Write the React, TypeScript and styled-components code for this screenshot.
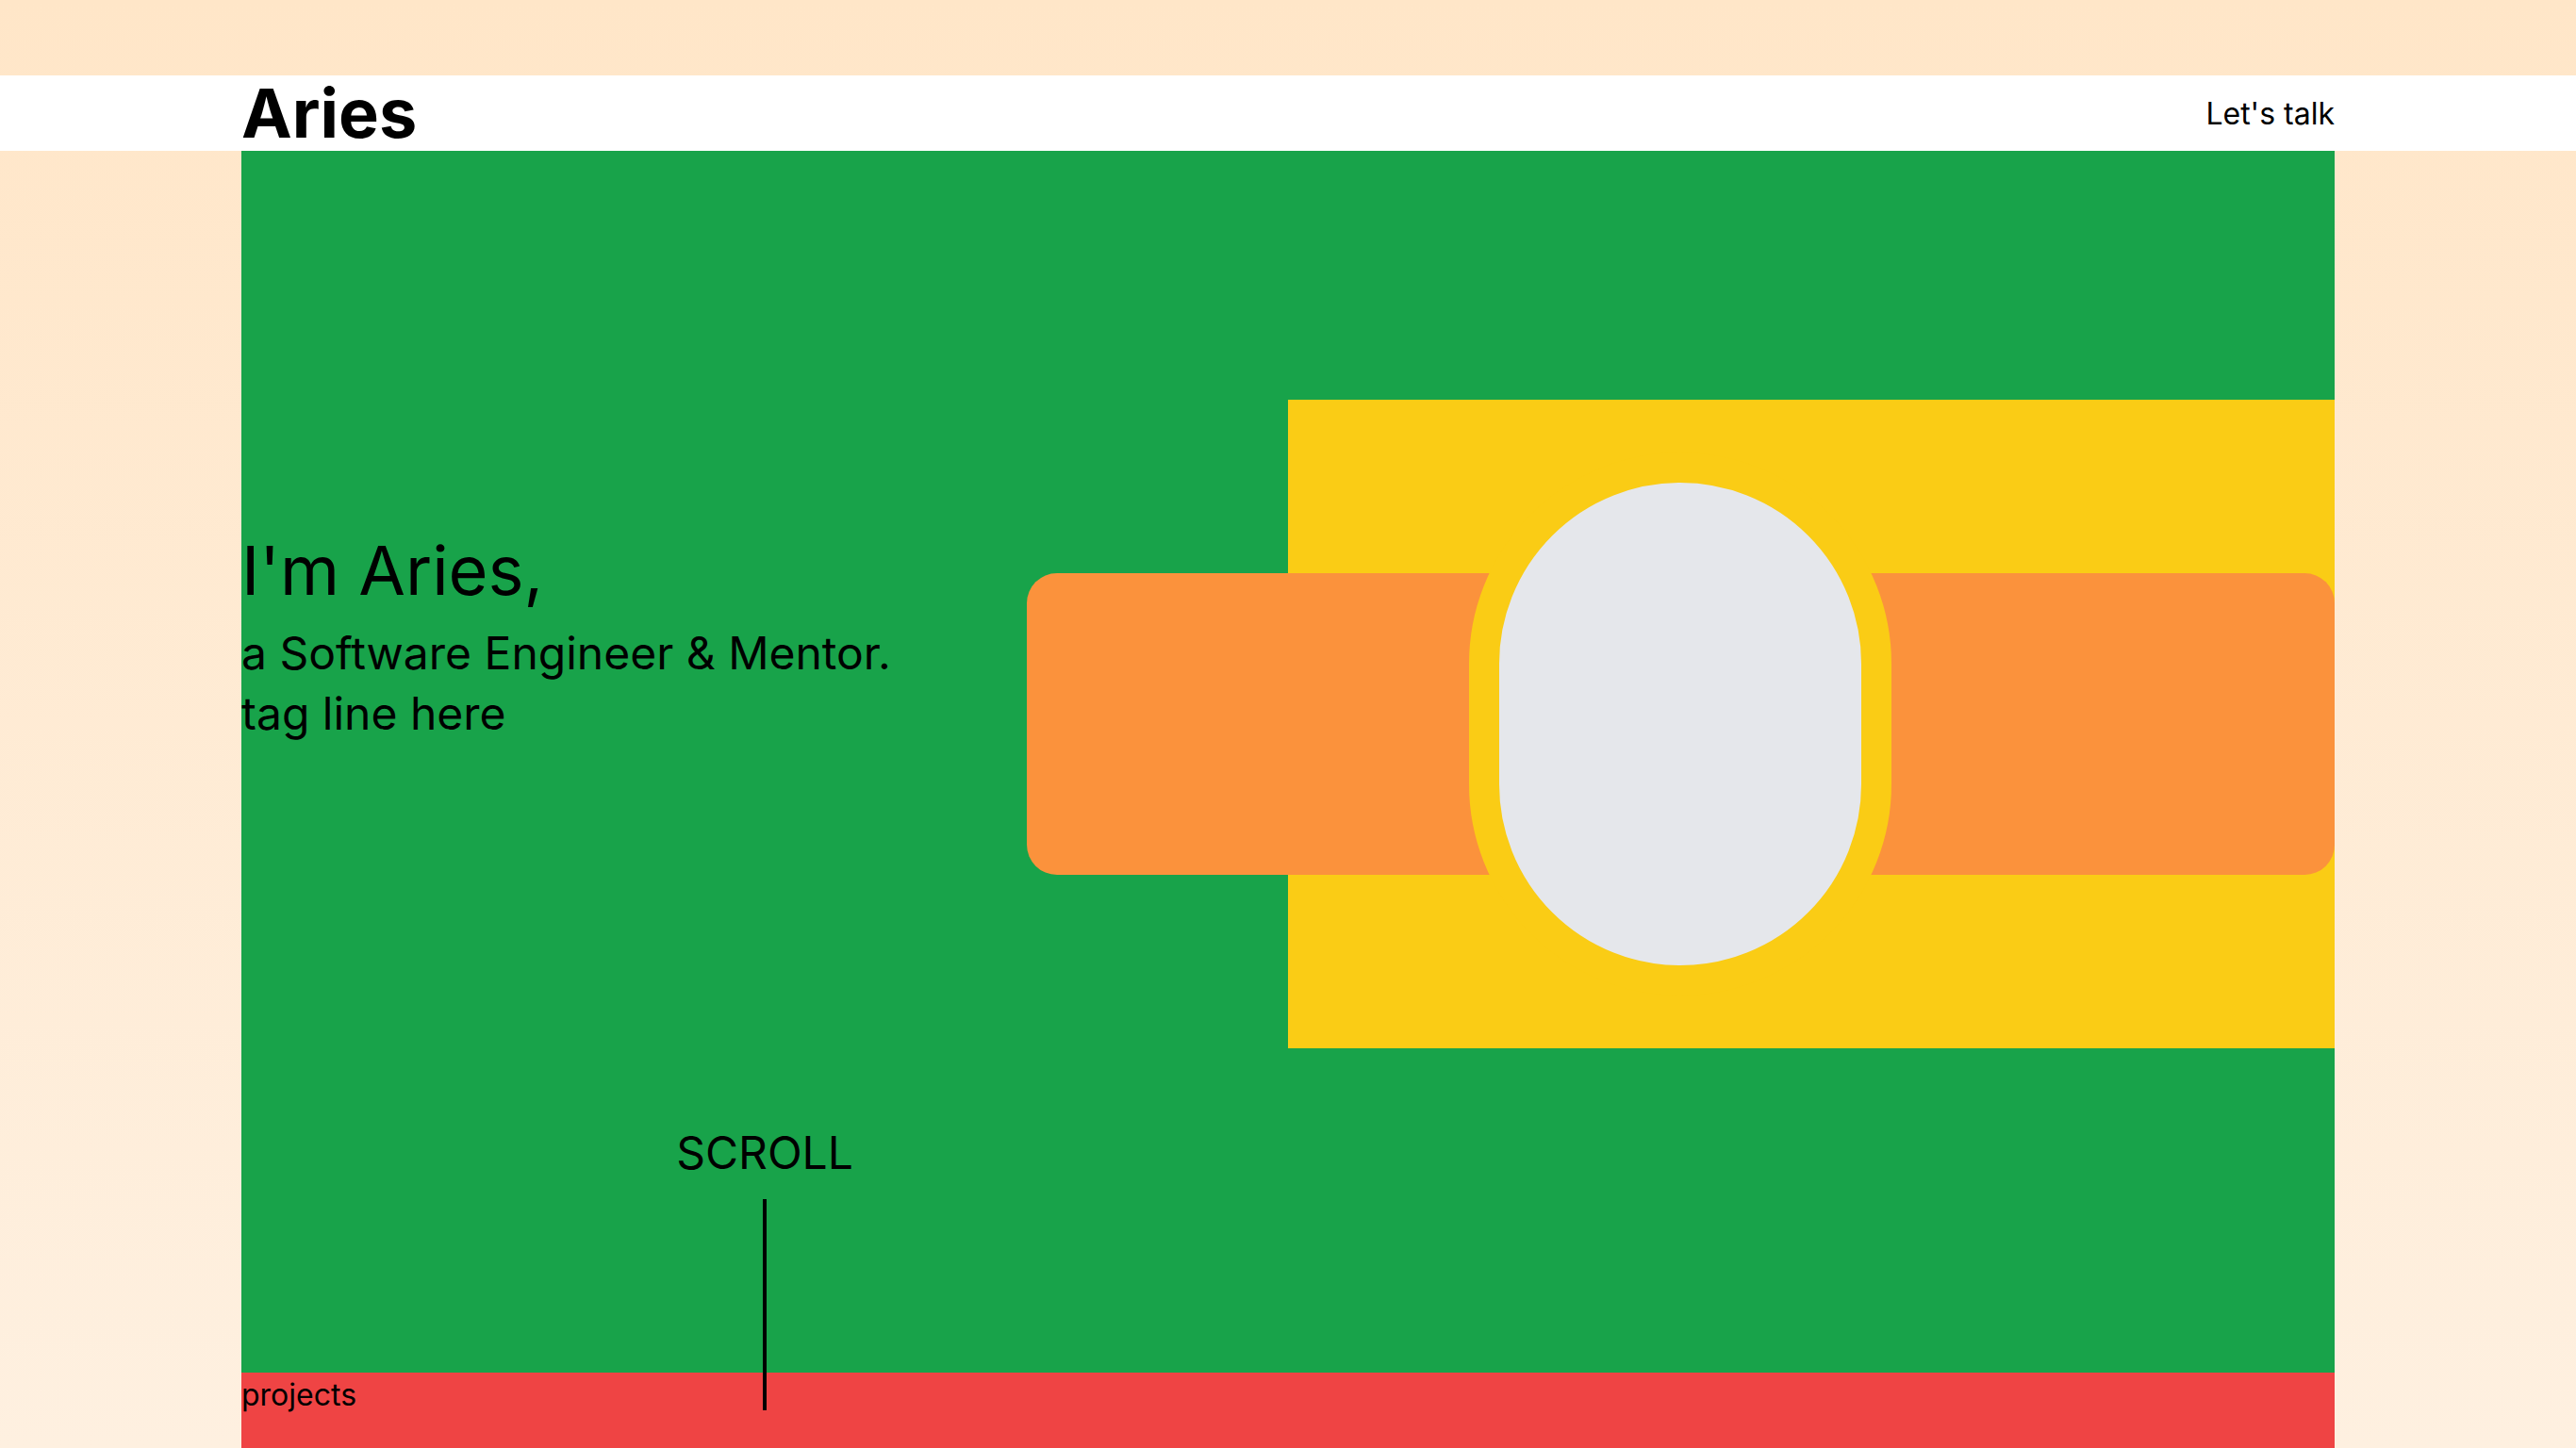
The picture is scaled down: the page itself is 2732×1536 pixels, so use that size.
import React from "react";
import styled, { createGlobalStyle } from "styled-components";

const GlobalStyle = createGlobalStyle`
  html, body {
    margin: 0;
    padding: 0;
  }
  body {
    font-family: Inter, "Noto Sans", sans-serif;
    color: #000;
    background: linear-gradient(180deg, #ffe6c8 0%, #fef0e0 100%);
    min-height: 100vh;
  }
  * { box-sizing: border-box; }
`;

const Page = styled.div`
  display: flex;
  flex-direction: column;
  padding-top: 80px;
`;

const HeaderBar = styled.header`
  background: #ffffff;
  height: 80px;
`;

const Container = styled.div`
  width: 2220px;
  margin: 0 auto;
`;

const HeaderInner = styled(Container)`
  height: 100%;
  display: flex;
  align-items: center;
  justify-content: space-between;
`;

const Logo = styled.div`
  font-size: 72px;
  font-weight: 700;
  line-height: 1;
`;

const NavLink = styled.a`
  font-size: 32px;
  line-height: 1;
  padding-top: 2px;
  color: #000;
  text-decoration: none;
`;

const Hero = styled.section`
  background: #18a34a;
  height: 1296px;
  display: flex;
  flex-direction: column;
  padding-top: 264px;
`;

const HeroGrid = styled.div`
  display: grid;
  grid-template-columns: 1fr 1fr;
  align-items: start;
`;

const Intro = styled.div`
  padding-top: 138px;
  display: flex;
  flex-direction: column;
`;

const Title = styled.h1`
  margin: 0;
  font-size: 72px;
  font-weight: 400;
  line-height: 86px;
`;

const Subtitle = styled.p`
  margin: 0;
  font-size: 48px;
  line-height: 64px;
  font-weight: 400;
  &:first-of-type {
    margin-top: 13px;
  }
`;

const Stage = styled.div`
  background: #facc15;
  height: 688px;
  display: flex;
  align-items: center;
  justify-content: flex-end;
`;

const Band = styled.div`
  flex: none;
  width: 125%;
  height: 320px;
  background: #fb923c;
  border-radius: 32px;
  display: flex;
  align-items: center;
  justify-content: center;
`;

const Portrait = styled.div`
  flex: none;
  box-sizing: content-box;
  width: 384px;
  height: 512px;
  background: #e5e7eb;
  border: 32px solid #facc15;
  border-radius: 9999px;
`;

const ScrollRow = styled.div`
  display: grid;
  grid-template-columns: 1fr 1fr;
  margin-top: 82px;
`;

const ScrollCue = styled.div`
  display: flex;
  flex-direction: column;
  align-items: center;
  gap: 20px;
`;

const ScrollLabel = styled.span`
  font-size: 48px;
  line-height: 58px;
`;

const ScrollLine = styled.div`
  position: relative;
  z-index: 1;
  width: 4px;
  height: 224px;
  background: #000;
`;

const Projects = styled.section`
  background: #ef4444;
  height: 80px;
`;

const SectionLabel = styled.h2`
  margin: 0;
  font-size: 32px;
  font-weight: 400;
  line-height: 1.5;
`;

export default function App() {
  return (
    <>
      <GlobalStyle />
      <Page>
        <HeaderBar>
          <HeaderInner>
            <Logo>Aries</Logo>
            <NavLink href="#contact">Let's talk</NavLink>
          </HeaderInner>
        </HeaderBar>
        <Container>
          <Hero>
            <HeroGrid>
              <Intro>
                <Title>I'm Aries,</Title>
                <Subtitle>a Software Engineer &amp; Mentor.</Subtitle>
                <Subtitle>tag line here</Subtitle>
              </Intro>
              <Stage>
                <Band>
                  <Portrait />
                </Band>
              </Stage>
            </HeroGrid>
            <ScrollRow>
              <ScrollCue>
                <ScrollLabel>SCROLL</ScrollLabel>
                <ScrollLine />
              </ScrollCue>
            </ScrollRow>
          </Hero>
          <Projects>
            <SectionLabel>projects</SectionLabel>
          </Projects>
        </Container>
      </Page>
    </>
  );
}
